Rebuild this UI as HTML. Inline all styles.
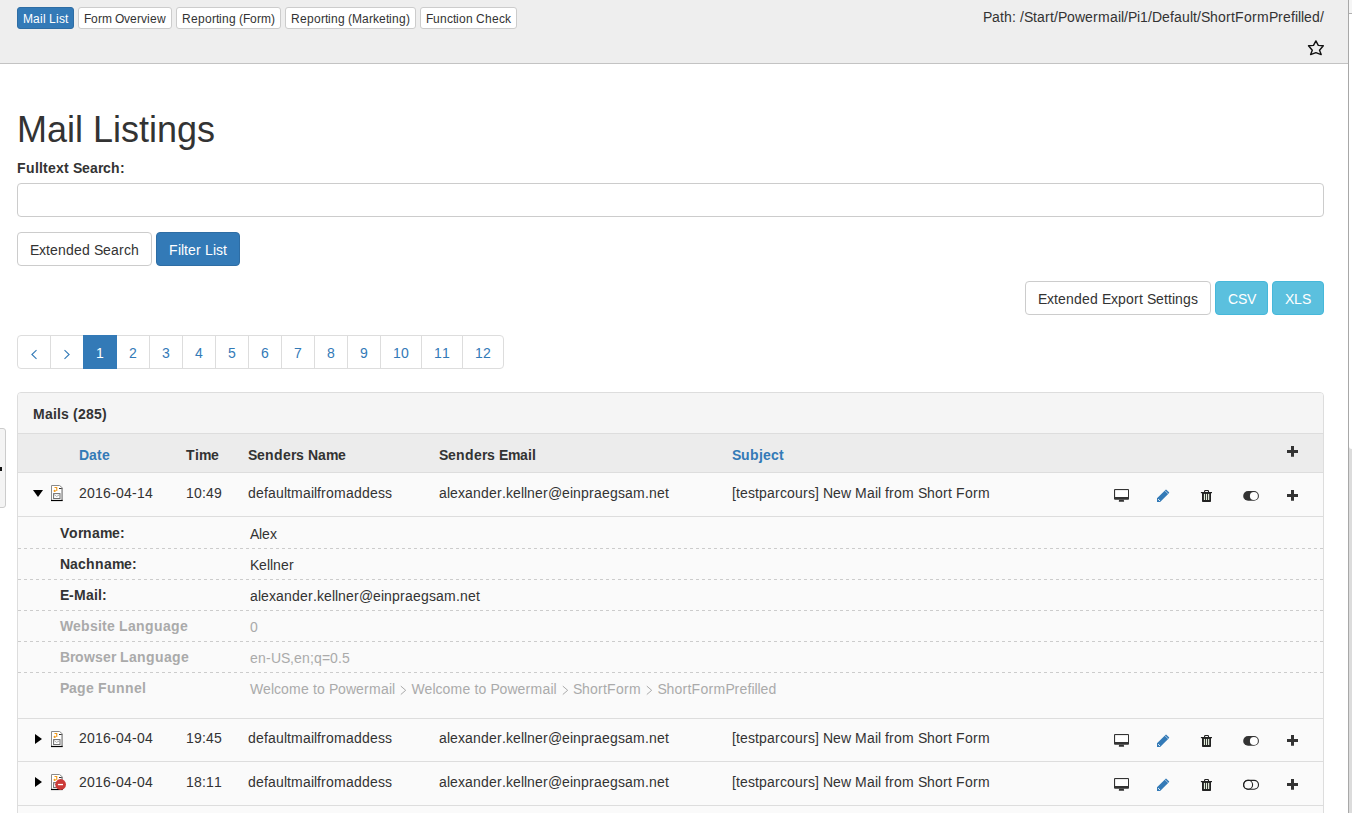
<!DOCTYPE html>
<html><head><meta charset="utf-8"><style>
*{box-sizing:border-box;margin:0;padding:0}
html,body{width:1352px;height:813px;overflow:hidden;background:#fff;font-family:"Liberation Sans",sans-serif;font-size:14px;line-height:20px;color:#333}
#doc{position:absolute;left:0;top:0;width:1348px;height:64px;background:#eee;border-bottom:1px solid #c3c3c3}
.sbtn{position:absolute;top:7px;height:22px;font-size:12px;line-height:18px;padding:2px 5px 0;border:1px solid #ccc;border-radius:3px;background:#fff;color:#333;white-space:nowrap}
.sbtn.pri{background:#337ab7;border-color:#2e6da4;color:#fff}
#path{position:absolute;right:24px;top:7px;font-size:14px;line-height:20px;color:#333;white-space:nowrap}
h1{position:absolute;left:17px;top:108px;font-size:36px;line-height:44px;font-weight:normal;color:#333;white-space:nowrap}
.lbl{position:absolute;left:17px;top:158px;font-weight:bold;white-space:nowrap}
#search{position:absolute;left:17px;top:183px;width:1307px;height:34px;border:1px solid #ccc;border-radius:4px;background:#fff}
.btn{position:absolute;height:34px;padding:7px 12px 5px;border:1px solid #ccc;border-radius:4px;background:#fff;color:#333;white-space:nowrap;font-size:14px;line-height:20px}
.btn.pri{background:#337ab7;border-color:#2e6da4;color:#fff}
.btn.info{background:#5bc0de;border-color:#46b8da;color:#fff}
#pag{position:absolute;left:17px;top:335px;height:34px;display:flex}
#pag>span{display:block;height:34px;padding:7px 12px 5px;border:1px solid #ddd;margin-left:-1px;color:#337ab7;background:#fff;line-height:20px;white-space:nowrap}
#pag>span:first-child{margin-left:0;border-radius:4px 0 0 4px}
#pag>span:last-child{border-radius:0 4px 4px 0}
#pag>span.act{background:#337ab7;border-color:#337ab7;color:#fff;position:relative;z-index:2}
#panel{position:absolute;left:17px;top:392px;width:1307px;height:500px;border:1px solid #ddd;border-radius:4px;background:#fafafa;overflow:hidden}
#ph{height:41px;background:#f5f5f5;border-bottom:1px solid #ddd;padding:11px 15px 9px;font-weight:bold;white-space:nowrap}
#th{position:absolute;left:0;top:41px;width:1305px;height:39px;background:#ececec;border-bottom:1px solid #ddd}
#th .c{top:11px;font-weight:bold}
.c{position:absolute;white-space:nowrap;line-height:20px}
.lnk{color:#337ab7}
.ic{position:absolute;display:block}
.row{position:absolute;left:0;width:1305px;border-bottom:1px solid #ddd;background:#fafafa}
.row .c{top:10px}
#det{position:absolute;left:0;top:124px;width:1305px;height:202px;border-bottom:1px solid #ddd;background:#fafafa}
.dr{position:relative;height:31px}
.dash{position:absolute;left:0;width:1305px;height:1px;background:repeating-linear-gradient(90deg,#ccc 0 3px,transparent 3px 6px)}
.dr b{position:absolute;left:42px;top:6px;font-weight:bold;white-space:nowrap}
.dr i{position:absolute;left:232px;top:7px;font-style:normal;white-space:nowrap}
.dr.g b,.dr.g i{color:#aaa}
.sep{display:inline-block;width:16.5px;height:0;position:relative}
.sep svg{position:absolute;left:0;top:-9px}
#rline{position:absolute;left:1348px;top:0;width:1px;height:813px;background:#a8a8a8}
#rbox{position:absolute;left:1349px;top:0;width:3px;height:813px;background:#dcdcdc}
#rtop{position:absolute;left:1349px;top:0;width:3px;height:14px;background:#f5f5f5;border-bottom:1px solid #b0b0b0}
#rwhite{position:absolute;left:1349px;top:14px;width:3px;height:435px;background:#fff;border-bottom-left-radius:3px}
#lmark{position:absolute;left:0;top:467px;width:2px;height:4px;background:#111}
#lbox{position:absolute;left:-4px;top:428px;width:10px;height:80px;border:1px solid #ccc;border-radius:3px;background:#f4f4f4}
</style></head><body>
<div id="doc">
<div class="sbtn pri h" style="left:17px">Mail List</div>
<div class="sbtn h" style="left:78px">Form Overview</div>
<div class="sbtn h" style="left:176px">Reporting (Form)</div>
<div class="sbtn h" style="left:285px">Reporting (Marketing)</div>
<div class="sbtn h" style="left:420px">Function Check</div>
<div id="path" class="h">Path: /Start/Powermail/Pi1/Default/ShortFormPrefilled/</div>
<svg class="ic" style="left:1307px;top:39px" width="18" height="18" viewBox="0 0 18 18"><path d="M8.9 1.9L11.3 6.4 16.3 6.7 12.5 11.2 14.2 15.6 8.9 13.6 3.6 15.6 5.3 11.2 1.5 6.7 6.5 6.4z" fill="none" stroke="#111" stroke-width="1.4" stroke-linejoin="round"/></svg>
</div>
<h1 class="h">Mail Listings</h1>
<div class="lbl h">Fulltext Search:</div>
<div id="search"></div>
<div class="btn h" style="left:17px;top:232px">Extended Search</div>
<div class="btn pri h" style="left:156px;top:232px">Filter List</div>
<div class="btn h" style="left:1025px;top:281px">Extended Export Settings</div>
<div class="btn info h" style="left:1215px;top:281px;width:53px">CSV</div>
<div class="btn info h" style="left:1272px;top:281px">XLS</div>
<div id="pag"><span><svg width="8" height="12" viewBox="0 0 8 12" style="display:block;margin-top:5px"><path d="M6.5 2.2L1.9 6.5 6.5 10.8" fill="none" stroke="#337ab7" stroke-width="1.1"/></svg></span><span><svg width="8" height="12" viewBox="0 0 8 12" style="display:block;margin-top:5px"><path d="M1.5 2.2L6.1 6.5 1.5 10.8" fill="none" stroke="#337ab7" stroke-width="1.1"/></svg></span><span class="act h">1</span><span class="h">2</span><span class="h">3</span><span class="h">4</span><span class="h">5</span><span class="h">6</span><span class="h">7</span><span class="h">8</span><span class="h">9</span><span class="h">10</span><span class="h">11</span><span class="h">12</span></div>
<div id="panel">
<div id="ph" class="h">Mails (285)</div>
<div id="th">
<span class="c lnk h" style="left:61px">Date</span>
<span class="c h" style="left:168px">Time</span>
<span class="c h" style="left:230px">Senders Name</span>
<span class="c h" style="left:421px">Senders Email</span>
<span class="c lnk h" style="left:714px">Subject</span>
<svg class="ic" style="left:1268px;top:12px" width="12" height="12" viewBox="0 0 12 12"><path d="M1 4.1h11v2.8H1z M5 0.1h3v10.7H5z" fill="#333"/></svg>
</div>
<div class="row" style="top:80px;height:44px"><svg class="ic" style="left:15px;top:17px" width="10" height="7" viewBox="0 0 10 7"><path d="M0 0h10L5 7z" fill="#000"/></svg><svg class="ic" style="left:33px;top:12px" width="13" height="17" viewBox="0 0 13 17"><path d="M0.5 0.5H8.6L11.8 3.3V15.5H0.5z" fill="#fff"/><path d="M0.5 16V0.5H8.6L11.8 3.3" fill="none" stroke="#8a8a8a" stroke-width="1"/><rect x="8" y="3.1" width="3.4" height="0.8" fill="#000"/><rect x="10.3" y="3.3" width="1.6" height="12.7" fill="#999"/><rect x="0" y="14.9" width="11.6" height="1.2" fill="#000"/><path d="M5.2 2H6.3V6H5.2z M3.5 2H6.3V3H3.5z" fill="#f29a1a"/><circle cx="3.7" cy="5.9" r="1.1" fill="#f29a1a"/><rect x="2.6" y="8.6" width="6.4" height="4.9" fill="#fff" stroke="#6f6f6f" stroke-width="1"/><path d="M3.2 9.6L5.6 11.4 8.4 9.9" fill="none" stroke="#9a9a9a" stroke-width="0.8"/></svg><div style="position:absolute;left:0;top:0px;width:100%;height:100%"><span class="c h" style="left:61px">2016-04-14</span><span class="c h" style="left:168px">10:49</span><span class="c h" style="left:230px">defaultmailfromaddess</span><span class="c h" style="left:421px">alexander.kellner@einpraegsam.net</span><span class="c h" style="left:714px">[testparcours] New Mail from Short Form</span><svg class="ic" style="left:1096px;top:16px" width="15" height="13" viewBox="0 0 15 13"><rect x="0" y="0" width="15.1" height="10.8" rx="1" fill="#333"/><rect x="1.1" y="1.1" width="12.9" height="6.9" fill="#fff"/><path d="M5.1 10.8h4.7l0.3 2H4.8z" fill="#333"/></svg><svg class="ic" style="left:1138px;top:16px" width="15" height="15" viewBox="0 0 15 15"><path d="M1 13V9.3L9.4 0.9Q10 0.3 10.6 0.9L13 3.3Q13.5 3.8 12.9 4.2L4.1 13z" fill="#337ab7"/><path d="M8.8 1.5l3.4 3.4" stroke="#fff" stroke-width="0.7" opacity="0.85"/><path d="M2.1 10.2l1.9 1.7" stroke="#fff" stroke-width="1" opacity="0.9"/></svg><svg class="ic" style="left:1182px;top:17px" width="13" height="13" viewBox="0 0 13 13"><path d="M4.6 2.1V1.3q0-0.8 0.8-0.8h2.3q0.8 0 0.8 0.8v0.8" stroke="#222" stroke-width="1.1" fill="none"/><rect x="0.9" y="2" width="11.1" height="1.2" fill="#222"/><path d="M2 3.1h9v8.1q0 0.8-0.8 0.8H2.8q-0.8 0-0.8-0.8z" fill="#222"/><rect x="3.9" y="3.9" width="1.2" height="6.1" fill="#e4efdc"/><rect x="6" y="3.9" width="1.1" height="6.1" fill="#e4efdc"/><rect x="8.05" y="3.9" width="1.2" height="6.1" fill="#e4efdc"/></svg><svg class="ic" style="left:1225px;top:17px" width="17" height="12" viewBox="0 0 17 12"><rect x="0.2" y="1" width="15.7" height="9.8" rx="4.9" fill="#333"/><circle cx="10.9" cy="5.9" r="4" fill="#fff"/></svg><svg class="ic" style="left:1268px;top:17px" width="12" height="12" viewBox="0 0 12 12"><path d="M1 4.1h11v2.8H1z M5 0.1h3v10.7H5z" fill="#333"/></svg></div></div>

<div id="det">
<div class="dr"><b class="h">Vorname:</b><i class="h">Alex</i></div>
<div class="dr"><b class="h">Nachname:</b><i class="h">Kellner</i></div>
<div class="dr"><b class="h">E-Mail:</b><i class="h">alexander.kellner@einpraegsam.net</i></div>
<div class="dr g"><b class="h">Website Language</b><i class="h">0</i></div>
<div class="dr g"><b class="h">Browser Language</b><i class="h">en-US,en;q=0.5</i></div>
<div class="dr g"><b class="h">Page Funnel</b><i><span class="h">Welcome to Powermail</span><span class="sep"><svg width="14" height="11" viewBox="0 0 14 11"><path d="M5.8 1.1L10.7 5.3 5.8 9.5" fill="none" stroke="#aaa" stroke-width="1"/></svg></span><span class="h">Welcome to Powermail</span><span class="sep"><svg width="14" height="11" viewBox="0 0 14 11"><path d="M5.8 1.1L10.7 5.3 5.8 9.5" fill="none" stroke="#aaa" stroke-width="1"/></svg></span><span class="h">ShortForm</span><span class="sep"><svg width="14" height="11" viewBox="0 0 14 11"><path d="M5.8 1.1L10.7 5.3 5.8 9.5" fill="none" stroke="#aaa" stroke-width="1"/></svg></span><span class="h">ShortFormPrefilled</span></i></div>
<div class="dash" style="top:31px"></div><div class="dash" style="top:62px"></div><div class="dash" style="top:93px"></div><div class="dash" style="top:124px"></div><div class="dash" style="top:155px"></div>
</div>

<div class="row" style="top:326px;height:43px"><svg class="ic" style="left:17px;top:15px" width="7" height="10" viewBox="0 0 7 10"><path d="M0 0l7 5-7 5z" fill="#000"/></svg><svg class="ic" style="left:33px;top:12px" width="13" height="17" viewBox="0 0 13 17"><path d="M0.5 0.5H8.6L11.8 3.3V15.5H0.5z" fill="#fff"/><path d="M0.5 16V0.5H8.6L11.8 3.3" fill="none" stroke="#8a8a8a" stroke-width="1"/><rect x="8" y="3.1" width="3.4" height="0.8" fill="#000"/><rect x="10.3" y="3.3" width="1.6" height="12.7" fill="#999"/><rect x="0" y="14.9" width="11.6" height="1.2" fill="#000"/><path d="M5.2 2H6.3V6H5.2z M3.5 2H6.3V3H3.5z" fill="#f29a1a"/><circle cx="3.7" cy="5.9" r="1.1" fill="#f29a1a"/><rect x="2.6" y="8.6" width="6.4" height="4.9" fill="#fff" stroke="#6f6f6f" stroke-width="1"/><path d="M3.2 9.6L5.6 11.4 8.4 9.9" fill="none" stroke="#9a9a9a" stroke-width="0.8"/></svg><div style="position:absolute;left:0;top:-1px;width:100%;height:100%"><span class="c h" style="left:61px">2016-04-04</span><span class="c h" style="left:168px">19:45</span><span class="c h" style="left:230px">defaultmailfromaddess</span><span class="c h" style="left:421px">alexander.kellner@einpraegsam.net</span><span class="c h" style="left:714px">[testparcours] New Mail from Short Form</span><svg class="ic" style="left:1096px;top:16px" width="15" height="13" viewBox="0 0 15 13"><rect x="0" y="0" width="15.1" height="10.8" rx="1" fill="#333"/><rect x="1.1" y="1.1" width="12.9" height="6.9" fill="#fff"/><path d="M5.1 10.8h4.7l0.3 2H4.8z" fill="#333"/></svg><svg class="ic" style="left:1138px;top:16px" width="15" height="15" viewBox="0 0 15 15"><path d="M1 13V9.3L9.4 0.9Q10 0.3 10.6 0.9L13 3.3Q13.5 3.8 12.9 4.2L4.1 13z" fill="#337ab7"/><path d="M8.8 1.5l3.4 3.4" stroke="#fff" stroke-width="0.7" opacity="0.85"/><path d="M2.1 10.2l1.9 1.7" stroke="#fff" stroke-width="1" opacity="0.9"/></svg><svg class="ic" style="left:1182px;top:17px" width="13" height="13" viewBox="0 0 13 13"><path d="M4.6 2.1V1.3q0-0.8 0.8-0.8h2.3q0.8 0 0.8 0.8v0.8" stroke="#222" stroke-width="1.1" fill="none"/><rect x="0.9" y="2" width="11.1" height="1.2" fill="#222"/><path d="M2 3.1h9v8.1q0 0.8-0.8 0.8H2.8q-0.8 0-0.8-0.8z" fill="#222"/><rect x="3.9" y="3.9" width="1.2" height="6.1" fill="#e4efdc"/><rect x="6" y="3.9" width="1.1" height="6.1" fill="#e4efdc"/><rect x="8.05" y="3.9" width="1.2" height="6.1" fill="#e4efdc"/></svg><svg class="ic" style="left:1225px;top:17px" width="17" height="12" viewBox="0 0 17 12"><rect x="0.2" y="1" width="15.7" height="9.8" rx="4.9" fill="#333"/><circle cx="10.9" cy="5.9" r="4" fill="#fff"/></svg><svg class="ic" style="left:1268px;top:17px" width="12" height="12" viewBox="0 0 12 12"><path d="M1 4.1h11v2.8H1z M5 0.1h3v10.7H5z" fill="#333"/></svg></div></div>

<div class="row" style="top:369px;height:44px"><svg class="ic" style="left:17px;top:15px" width="7" height="10" viewBox="0 0 7 10"><path d="M0 0l7 5-7 5z" fill="#000"/></svg><svg class="ic" style="left:33px;top:12px" width="13" height="17" viewBox="0 0 13 17"><path d="M0.5 0.5H8.6L11.8 3.3V15.5H0.5z" fill="#fff"/><path d="M0.5 16V0.5H8.6L11.8 3.3" fill="none" stroke="#8a8a8a" stroke-width="1"/><rect x="8" y="3.1" width="3.4" height="0.8" fill="#000"/><rect x="10.3" y="3.3" width="1.6" height="12.7" fill="#999"/><rect x="0" y="14.9" width="11.6" height="1.2" fill="#000"/><path d="M5.2 2H6.3V6H5.2z M3.5 2H6.3V3H3.5z" fill="#f29a1a"/><circle cx="3.7" cy="5.9" r="1.1" fill="#f29a1a"/><rect x="2.6" y="8.6" width="6.4" height="4.9" fill="#fff" stroke="#6f6f6f" stroke-width="1"/><path d="M3.2 9.6L5.6 11.4 8.4 9.9" fill="none" stroke="#9a9a9a" stroke-width="0.8"/></svg><svg class="ic" style="left:37px;top:17px" width="12" height="12" viewBox="0 0 12 12"><circle cx="5.6" cy="5.5" r="5.4" fill="#cc3a38"/><rect x="2.9" y="4.9" width="5.1" height="1.3" fill="#fff"/></svg><div style="position:absolute;left:0;top:0px;width:100%;height:100%"><span class="c h" style="left:61px">2016-04-04</span><span class="c h" style="left:168px">18:11</span><span class="c h" style="left:230px">defaultmailfromaddess</span><span class="c h" style="left:421px">alexander.kellner@einpraegsam.net</span><span class="c h" style="left:714px">[testparcours] New Mail from Short Form</span><svg class="ic" style="left:1096px;top:16px" width="15" height="13" viewBox="0 0 15 13"><rect x="0" y="0" width="15.1" height="10.8" rx="1" fill="#333"/><rect x="1.1" y="1.1" width="12.9" height="6.9" fill="#fff"/><path d="M5.1 10.8h4.7l0.3 2H4.8z" fill="#333"/></svg><svg class="ic" style="left:1138px;top:16px" width="15" height="15" viewBox="0 0 15 15"><path d="M1 13V9.3L9.4 0.9Q10 0.3 10.6 0.9L13 3.3Q13.5 3.8 12.9 4.2L4.1 13z" fill="#337ab7"/><path d="M8.8 1.5l3.4 3.4" stroke="#fff" stroke-width="0.7" opacity="0.85"/><path d="M2.1 10.2l1.9 1.7" stroke="#fff" stroke-width="1" opacity="0.9"/></svg><svg class="ic" style="left:1182px;top:17px" width="13" height="13" viewBox="0 0 13 13"><path d="M4.6 2.1V1.3q0-0.8 0.8-0.8h2.3q0.8 0 0.8 0.8v0.8" stroke="#222" stroke-width="1.1" fill="none"/><rect x="0.9" y="2" width="11.1" height="1.2" fill="#222"/><path d="M2 3.1h9v8.1q0 0.8-0.8 0.8H2.8q-0.8 0-0.8-0.8z" fill="#222"/><rect x="3.9" y="3.9" width="1.2" height="6.1" fill="#e4efdc"/><rect x="6" y="3.9" width="1.1" height="6.1" fill="#e4efdc"/><rect x="8.05" y="3.9" width="1.2" height="6.1" fill="#e4efdc"/></svg><svg class="ic" style="left:1225px;top:17px" width="17" height="12" viewBox="0 0 17 12"><rect x="0.6" y="1.4" width="14.9" height="8.85" rx="4.4" fill="none" stroke="#222" stroke-width="1.1"/><circle cx="5.1" cy="5.8" r="4.5" fill="none" stroke="#222" stroke-width="1.1"/></svg><svg class="ic" style="left:1268px;top:17px" width="12" height="12" viewBox="0 0 12 12"><path d="M1 4.1h11v2.8H1z M5 0.1h3v10.7H5z" fill="#333"/></svg></div></div>

<div class="row" style="top:413px;height:44px"></div>
</div>
<div id="rline"></div><div id="rbox"></div>
<div id="lbox"></div><div id="rtop"></div><div id="rwhite"></div><div id="lmark"></div>
<script>
(function(){
var cv=document.createElement('canvas').getContext('2d');
var els=document.querySelectorAll('.h');
for(var e=0;e<els.length;e++){
  var el=els[e];
  var w=document.createTreeWalker(el,NodeFilter.SHOW_TEXT,null,false);var nodes=[];
  while(w.nextNode())nodes.push(w.currentNode);
  for(var k=0;k<nodes.length;k++){
    var n=nodes[k];var t=n.nodeValue;if(!t.trim())continue;
    var cs=getComputedStyle(n.parentNode);
    cv.font=cs.fontStyle+' '+cs.fontWeight+' '+cs.fontSize+' '+cs.fontFamily;
    var f=document.createDocumentFragment();
    for(var i=0;i<t.length;i++){
      var s=document.createElement('span');s.style.display='inline-block';
      s.style.width=Math.round(cv.measureText(t[i]).width)+'px';
      s.textContent=t[i];f.appendChild(s);
    }
    n.parentNode.replaceChild(f,n);
  }
}
})();
</script></body></html>
